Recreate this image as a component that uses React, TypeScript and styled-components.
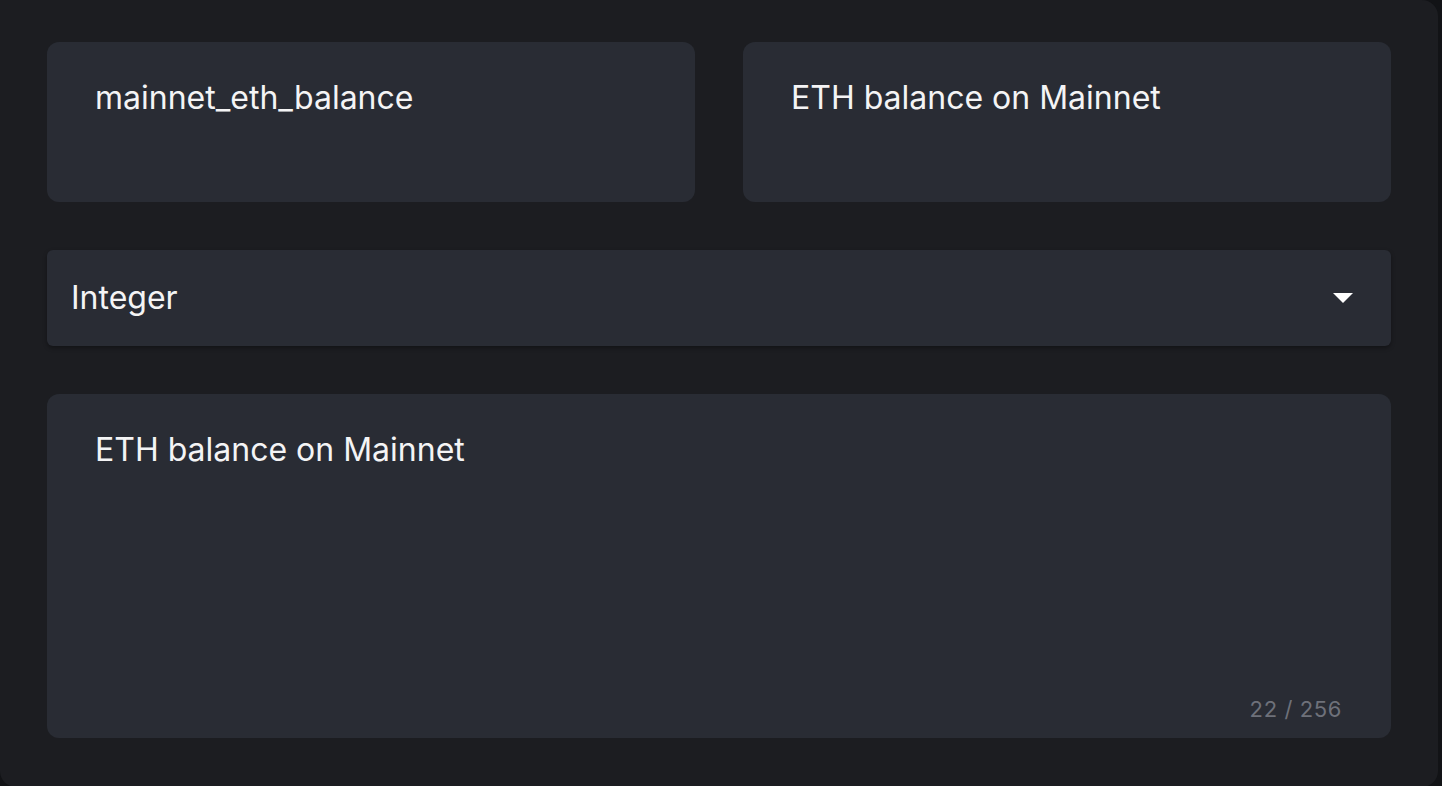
import React from "react";
import styled, { createGlobalStyle } from "styled-components";

const GlobalStyle = createGlobalStyle`
  html, body {
    margin: 0;
    padding: 0;
    background: #121316;
    overflow: hidden;
  }
  * {
    box-sizing: border-box;
  }
`;

const Panel = styled.main`
  width: 1438px;
  height: 787px;
  background: #1c1d21;
  border-radius: 0 16px 16px 16px;
  padding: 42px 47px 0 47px;
  display: flex;
  flex-direction: column;
  gap: 48px;
  font-family: Inter, "Noto Sans", sans-serif;
  color: #f4f4f5;
`;

const FieldRow = styled.div`
  display: grid;
  grid-template-columns: 1fr 1fr;
  gap: 48px;
`;

const TextBox = styled.div<{ $height: number }>`
  height: ${(p) => p.$height}px;
  background: #292c34;
  border-radius: 12px;
  padding: 32px 48px 0 48px;
  font-size: 32px;
  line-height: 48px;
  position: relative;
`;

const SelectBox = styled.div`
  height: 96px;
  background: #292c34;
  border-radius: 6px;
  box-shadow: 0 2px 4px rgba(0, 0, 0, 0.35);
  display: flex;
  align-items: center;
  justify-content: space-between;
  padding: 0 38px 0 24px;
  font-size: 32px;
  line-height: 44px;
`;

const Caret = styled.svg`
  width: 20px;
  height: 10px;
  display: block;
`;

const Counter = styled.span`
  position: absolute;
  right: 49px;
  bottom: 14px;
  font-size: 22px;
  line-height: 30px;
  color: #6e717a;
  letter-spacing: 0.6px;
`;

export default function App() {
  const description = "ETH balance on Mainnet";
  return (
    <>
      <GlobalStyle />
      <Panel>
        <FieldRow>
          <TextBox $height={160}>mainnet_eth_balance</TextBox>
          <TextBox $height={160}>ETH balance on Mainnet</TextBox>
        </FieldRow>
        <SelectBox>
          <span>Integer</span>
          <Caret viewBox="0 0 20 10">
            <path d="M0 0 L20 0 L10 10 Z" fill="#ffffff" />
          </Caret>
        </SelectBox>
        <TextBox $height={344}>
          {description}
          <Counter>{description.length} / 256</Counter>
        </TextBox>
      </Panel>
    </>
  );
}
